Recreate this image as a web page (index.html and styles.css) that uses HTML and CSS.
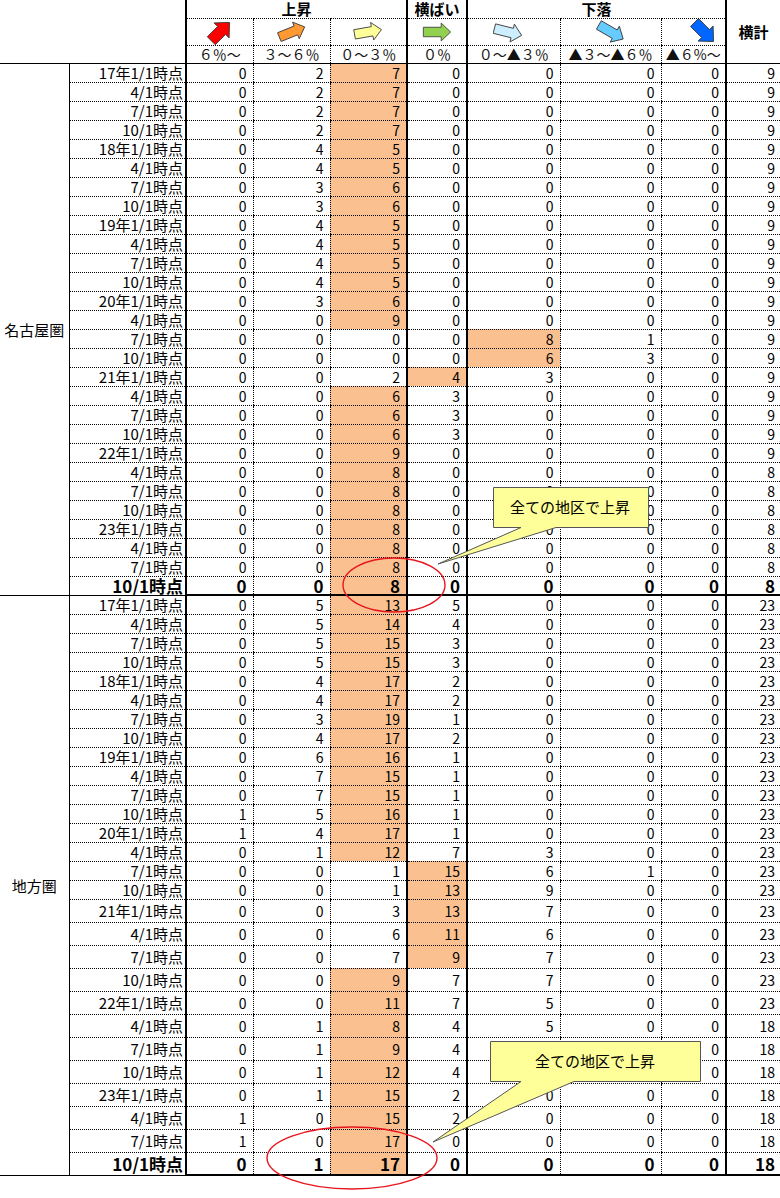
FILE: index.html
```html
<!DOCTYPE html>
<html lang="ja">
<head>
<meta charset="utf-8">
<title>地価動向</title>
<link rel="stylesheet" href="styles.css">
</head>
<body>
<table class="grid">
<colgroup>
<col class="c0"><col class="c1"><col class="c2"><col class="c3"><col class="c4"><col class="c5"><col class="c6"><col class="c7"><col class="c8"><col class="c9">
</colgroup>
<tr class="h0"><td class="blank" colspan="2" rowspan="3"></td><td class="hd" colspan="3">上昇</td><td class="hd">横ばい</td><td class="hd" colspan="3">下落</td><td class="yk" rowspan="3">横計</td></tr>
<tr class="h1">
<td class="ar"><svg class="arrow" viewBox="-15 -13 30 26" width="30" height="26"><path transform="rotate(-45) scale(1.12)" d="M-11,-5 H2 V-9.5 L12,0 L2,9.5 V5 H-11 Z" fill="#ff0000"/></svg></td>
<td class="ar"><svg class="arrow" viewBox="-15 -13 30 26" width="30" height="26"><path transform="rotate(-22) scale(1.05)" d="M-13,-4.5 H4 V-8.5 L13,0 L4,8.5 V4.5 H-13 Z" fill="#ff9933"/></svg></td>
<td class="ar"><svg class="arrow" viewBox="-15 -13 30 26" width="30" height="26"><path transform="rotate(-10) scale(1.05)" d="M-13,-4.5 H4 V-8.5 L13,0 L4,8.5 V4.5 H-13 Z" fill="#ffff99"/></svg></td>
<td class="ar"><svg class="arrow" viewBox="-15 -13 30 26" width="30" height="26"><path transform="scale(1.05)" d="M-13,-4.5 H4 V-8.5 L13,0 L4,8.5 V4.5 H-13 Z" fill="#92d050"/></svg></td>
<td class="ar ar-l"><svg class="arrow" viewBox="-15 -13 30 26" width="30" height="26"><path transform="rotate(14) scale(1.08)" d="M-13,-4.5 H4 V-8.5 L13,0 L4,8.5 V4.5 H-13 Z" fill="#cceeff"/></svg></td>
<td class="ar"><svg class="arrow" viewBox="-15 -13 30 26" width="30" height="26"><path transform="rotate(30) scale(1.08)" d="M-13,-4.5 H4 V-8.5 L13,0 L4,8.5 V4.5 H-13 Z" fill="#66ccff"/></svg></td>
<td class="ar ar-r"><svg class="arrow" viewBox="-15 -13 30 26" width="30" height="26"><path transform="rotate(45) scale(1.12)" d="M-12,-5 H2 V-9.5 L12,0 L2,9.5 V5 H-12 Z" fill="#0066ff"/></svg></td>
</tr>
<tr class="h2"><td class="pc">６％～</td><td class="pc">３～６％</td><td class="pc">０～３％</td><td class="pc">０％</td><td class="pc">０～▲３％</td><td class="pc">▲３～▲６％</td><td class="pc">▲６%～</td></tr>

<tr class="r"><td class="rg" rowspan="28">名古屋圏</td><td class="d">17年1/1時点</td><td>0</td><td>2</td><td class="hl">7</td><td>0</td><td>0</td><td>0</td><td>0</td><td>9</td></tr>
<tr class="r"><td class="d">4/1時点</td><td>0</td><td>2</td><td class="hl">7</td><td>0</td><td>0</td><td>0</td><td>0</td><td>9</td></tr>
<tr class="r"><td class="d">7/1時点</td><td>0</td><td>2</td><td class="hl">7</td><td>0</td><td>0</td><td>0</td><td>0</td><td>9</td></tr>
<tr class="r"><td class="d">10/1時点</td><td>0</td><td>2</td><td class="hl">7</td><td>0</td><td>0</td><td>0</td><td>0</td><td>9</td></tr>
<tr class="r"><td class="d">18年1/1時点</td><td>0</td><td>4</td><td class="hl">5</td><td>0</td><td>0</td><td>0</td><td>0</td><td>9</td></tr>
<tr class="r"><td class="d">4/1時点</td><td>0</td><td>4</td><td class="hl">5</td><td>0</td><td>0</td><td>0</td><td>0</td><td>9</td></tr>
<tr class="r"><td class="d">7/1時点</td><td>0</td><td>3</td><td class="hl">6</td><td>0</td><td>0</td><td>0</td><td>0</td><td>9</td></tr>
<tr class="r"><td class="d">10/1時点</td><td>0</td><td>3</td><td class="hl">6</td><td>0</td><td>0</td><td>0</td><td>0</td><td>9</td></tr>
<tr class="r"><td class="d">19年1/1時点</td><td>0</td><td>4</td><td class="hl">5</td><td>0</td><td>0</td><td>0</td><td>0</td><td>9</td></tr>
<tr class="r"><td class="d">4/1時点</td><td>0</td><td>4</td><td class="hl">5</td><td>0</td><td>0</td><td>0</td><td>0</td><td>9</td></tr>
<tr class="r"><td class="d">7/1時点</td><td>0</td><td>4</td><td class="hl">5</td><td>0</td><td>0</td><td>0</td><td>0</td><td>9</td></tr>
<tr class="r"><td class="d">10/1時点</td><td>0</td><td>4</td><td class="hl">5</td><td>0</td><td>0</td><td>0</td><td>0</td><td>9</td></tr>
<tr class="r"><td class="d">20年1/1時点</td><td>0</td><td>3</td><td class="hl">6</td><td>0</td><td>0</td><td>0</td><td>0</td><td>9</td></tr>
<tr class="r"><td class="d">4/1時点</td><td>0</td><td>0</td><td class="hl">9</td><td>0</td><td>0</td><td>0</td><td>0</td><td>9</td></tr>
<tr class="r"><td class="d">7/1時点</td><td>0</td><td>0</td><td>0</td><td>0</td><td class="hl">8</td><td>1</td><td>0</td><td>9</td></tr>
<tr class="r"><td class="d">10/1時点</td><td>0</td><td>0</td><td>0</td><td>0</td><td class="hl">6</td><td>3</td><td>0</td><td>9</td></tr>
<tr class="r"><td class="d">21年1/1時点</td><td>0</td><td>0</td><td>2</td><td class="hl">4</td><td>3</td><td>0</td><td>0</td><td>9</td></tr>
<tr class="r"><td class="d">4/1時点</td><td>0</td><td>0</td><td class="hl">6</td><td>3</td><td>0</td><td>0</td><td>0</td><td>9</td></tr>
<tr class="r"><td class="d">7/1時点</td><td>0</td><td>0</td><td class="hl">6</td><td>3</td><td>0</td><td>0</td><td>0</td><td>9</td></tr>
<tr class="r"><td class="d">10/1時点</td><td>0</td><td>0</td><td class="hl">6</td><td>3</td><td>0</td><td>0</td><td>0</td><td>9</td></tr>
<tr class="r"><td class="d">22年1/1時点</td><td>0</td><td>0</td><td class="hl">9</td><td>0</td><td>0</td><td>0</td><td>0</td><td>9</td></tr>
<tr class="r"><td class="d">4/1時点</td><td>0</td><td>0</td><td class="hl">8</td><td>0</td><td>0</td><td>0</td><td>0</td><td>8</td></tr>
<tr class="r"><td class="d">7/1時点</td><td>0</td><td>0</td><td class="hl">8</td><td>0</td><td>0</td><td>0</td><td>0</td><td>8</td></tr>
<tr class="r"><td class="d">10/1時点</td><td>0</td><td>0</td><td class="hl">8</td><td>0</td><td>0</td><td>0</td><td>0</td><td>8</td></tr>
<tr class="r"><td class="d">23年1/1時点</td><td>0</td><td>0</td><td class="hl">8</td><td>0</td><td>0</td><td>0</td><td>0</td><td>8</td></tr>
<tr class="r"><td class="d">4/1時点</td><td>0</td><td>0</td><td class="hl">8</td><td>0</td><td>0</td><td>0</td><td>0</td><td>8</td></tr>
<tr class="r"><td class="d">7/1時点</td><td>0</td><td>0</td><td class="hl">8</td><td>0</td><td>0</td><td>0</td><td>0</td><td>8</td></tr>
<tr class="r tot"><td class="d">10/1時点</td><td>0</td><td>0</td><td class="hl">8</td><td>0</td><td>0</td><td>0</td><td>0</td><td>8</td></tr>

<tr class="r"><td class="rg" rowspan="28">地方圏</td><td class="d">17年1/1時点</td><td>0</td><td>5</td><td class="hl">13</td><td>5</td><td>0</td><td>0</td><td>0</td><td>23</td></tr>
<tr class="r"><td class="d">4/1時点</td><td>0</td><td>5</td><td class="hl">14</td><td>4</td><td>0</td><td>0</td><td>0</td><td>23</td></tr>
<tr class="r"><td class="d">7/1時点</td><td>0</td><td>5</td><td class="hl">15</td><td>3</td><td>0</td><td>0</td><td>0</td><td>23</td></tr>
<tr class="r"><td class="d">10/1時点</td><td>0</td><td>5</td><td class="hl">15</td><td>3</td><td>0</td><td>0</td><td>0</td><td>23</td></tr>
<tr class="r"><td class="d">18年1/1時点</td><td>0</td><td>4</td><td class="hl">17</td><td>2</td><td>0</td><td>0</td><td>0</td><td>23</td></tr>
<tr class="r"><td class="d">4/1時点</td><td>0</td><td>4</td><td class="hl">17</td><td>2</td><td>0</td><td>0</td><td>0</td><td>23</td></tr>
<tr class="r"><td class="d">7/1時点</td><td>0</td><td>3</td><td class="hl">19</td><td>1</td><td>0</td><td>0</td><td>0</td><td>23</td></tr>
<tr class="r"><td class="d">10/1時点</td><td>0</td><td>4</td><td class="hl">17</td><td>2</td><td>0</td><td>0</td><td>0</td><td>23</td></tr>
<tr class="r"><td class="d">19年1/1時点</td><td>0</td><td>6</td><td class="hl">16</td><td>1</td><td>0</td><td>0</td><td>0</td><td>23</td></tr>
<tr class="r"><td class="d">4/1時点</td><td>0</td><td>7</td><td class="hl">15</td><td>1</td><td>0</td><td>0</td><td>0</td><td>23</td></tr>
<tr class="r"><td class="d">7/1時点</td><td>0</td><td>7</td><td class="hl">15</td><td>1</td><td>0</td><td>0</td><td>0</td><td>23</td></tr>
<tr class="r"><td class="d">10/1時点</td><td>1</td><td>5</td><td class="hl">16</td><td>1</td><td>0</td><td>0</td><td>0</td><td>23</td></tr>
<tr class="r"><td class="d">20年1/1時点</td><td>1</td><td>4</td><td class="hl">17</td><td>1</td><td>0</td><td>0</td><td>0</td><td>23</td></tr>
<tr class="r"><td class="d">4/1時点</td><td>0</td><td>1</td><td class="hl">12</td><td>7</td><td>3</td><td>0</td><td>0</td><td>23</td></tr>
<tr class="r"><td class="d">7/1時点</td><td>0</td><td>0</td><td>1</td><td class="hl">15</td><td>6</td><td>1</td><td>0</td><td>23</td></tr>
<tr class="r"><td class="d">10/1時点</td><td>0</td><td>0</td><td>1</td><td class="hl">13</td><td>9</td><td>0</td><td>0</td><td>23</td></tr>
<tr class="r t"><td class="d">21年1/1時点</td><td>0</td><td>0</td><td>3</td><td class="hl">13</td><td>7</td><td>0</td><td>0</td><td>23</td></tr>
<tr class="r t"><td class="d">4/1時点</td><td>0</td><td>0</td><td>6</td><td class="hl">11</td><td>6</td><td>0</td><td>0</td><td>23</td></tr>
<tr class="r t"><td class="d">7/1時点</td><td>0</td><td>0</td><td>7</td><td class="hl">9</td><td>7</td><td>0</td><td>0</td><td>23</td></tr>
<tr class="r t"><td class="d">10/1時点</td><td>0</td><td>0</td><td class="hl">9</td><td>7</td><td>7</td><td>0</td><td>0</td><td>23</td></tr>
<tr class="r t"><td class="d">22年1/1時点</td><td>0</td><td>0</td><td class="hl">11</td><td>7</td><td>5</td><td>0</td><td>0</td><td>23</td></tr>
<tr class="r t"><td class="d">4/1時点</td><td>0</td><td>1</td><td class="hl">8</td><td>4</td><td>5</td><td>0</td><td>0</td><td>18</td></tr>
<tr class="r t"><td class="d">7/1時点</td><td>0</td><td>1</td><td class="hl">9</td><td>4</td><td>0</td><td>0</td><td>0</td><td>18</td></tr>
<tr class="r t"><td class="d">10/1時点</td><td>0</td><td>1</td><td class="hl">12</td><td>4</td><td>0</td><td>0</td><td>0</td><td>18</td></tr>
<tr class="r t"><td class="d">23年1/1時点</td><td>0</td><td>1</td><td class="hl">15</td><td>2</td><td>0</td><td>0</td><td>0</td><td>18</td></tr>
<tr class="r t"><td class="d">4/1時点</td><td>1</td><td>0</td><td class="hl">15</td><td>2</td><td>0</td><td>0</td><td>0</td><td>18</td></tr>
<tr class="r t"><td class="d">7/1時点</td><td>1</td><td>0</td><td class="hl">17</td><td>0</td><td>0</td><td>0</td><td>0</td><td>18</td></tr>
<tr class="r t tot"><td class="d">10/1時点</td><td>0</td><td>1</td><td class="hl">17</td><td>0</td><td>0</td><td>0</td><td>0</td><td>18</td></tr>
</table>

<svg class="overlay" width="780" height="1198" viewBox="0 0 780 1198">
<path d="M493.5,487.5 H648.5 V527.5 H556 L438,564 L521,527.5 H493.5 Z" fill="#ffff99" stroke="#555" stroke-width="1"/>
<text class="callout-text" x="570" y="513" text-anchor="middle">全ての地区で上昇</text>
<ellipse cx="394" cy="585" rx="51" ry="27" fill="none" stroke="#e8141e" stroke-width="1.4"/>
<path d="M490.5,1041.5 H700.5 V1081.5 H574 L433,1142 L521,1081.5 H490.5 Z" fill="#ffff99" stroke="#555" stroke-width="1"/>
<text class="callout-text" x="595" y="1067" text-anchor="middle">全ての地区で上昇</text>
<ellipse cx="352" cy="1158" rx="85" ry="31" fill="none" stroke="#e8141e" stroke-width="1.4"/>
</svg>
</body>
</html>
```

FILE: styles.css
```css
html, body {
  margin: 0;
  padding: 0;
  background: #ffffff;
}
body {
  position: relative;
  width: 780px;
  height: 1198px;
  overflow: hidden;
  font-family: "Noto Sans CJK JP", "Noto Sans", sans-serif;
  font-size: 14px;
  color: #000;
}
.grid {
  border-collapse: collapse;
  table-layout: fixed;
  width: 780px;
}
.grid td {
  padding: 0 6px 0 0;
  text-align: right;
  vertical-align: middle;
  line-height: 1;
  white-space: nowrap;
  border-bottom: 1px dotted #000;
}
col.c0 { width: 69px; border-right: 1px solid #000; }
col.c1 { width: 117px; border-right: 2px solid #000; }
col.c2 { width: 67px; border-right: 1px dotted #000; }
col.c3 { width: 77px; border-right: 1px dotted #000; }
col.c4 { width: 77px; border-right: 2px solid #000; }
col.c5 { width: 60px; border-right: 2px solid #000; }
col.c6 { width: 93px; border-right: 1px dotted #000; }
col.c7 { width: 101px; border-right: 1px dotted #000; }
col.c8 { width: 65px; border-right: 2px solid #000; }
col.c9 { width: 54px; }

.h0 { height: 18px; }
.h1 { height: 26px; }
.h2 { height: 18px; }
.grid td.blank { border-bottom: 1px solid #000; }
.grid td.hd {
  text-align: center;
  padding: 0;
  font-weight: 700;
  font-size: 15px;
  line-height: 17px;
}
.grid td.yk {
  text-align: center;
  padding: 0;
  font-weight: 700;
  font-size: 15px;
  border-bottom: 1px solid #000;
}
.grid td.ar {
  text-align: center;
  padding: 0;
  line-height: 0;
}
.grid td.ar-l { padding-right: 12px; }
.grid td.ar-r { padding-left: 22px; }
.arrow {
  display: inline-block;
  vertical-align: middle;
}
.arrow path {
  stroke: #3a3a3a;
  stroke-width: 0.8;
  stroke-linejoin: miter;
}
.grid td.pc {
  text-align: center;
  padding: 0;
  font-size: 14px;
  color: #111;
  border-bottom: 1px solid #000;
}

.r { height: 19px; }
.r.t { height: 23px; }
.grid td.rg {
  text-align: center;
  padding: 0;
  font-size: 15px;
  border-bottom: 1px solid #000;
}
.grid td.d {
  padding-right: 2px;
  font-size: 15px;
}
.grid .r td:last-child { padding-right: 5px; }
.grid td.hl { background: #fac090; }

.grid .tot td {
  border-bottom: 2px solid #000;
  font-weight: 700;
  font-size: 17px;
}
.grid .tot td.d { border-bottom: 1px solid #000; }

.overlay {
  position: absolute;
  left: 0;
  top: 0;
  pointer-events: none;
}
.callout-text {
  font-family: "Noto Sans CJK JP", sans-serif;
  font-size: 15px;
  fill: #000;
}
```
